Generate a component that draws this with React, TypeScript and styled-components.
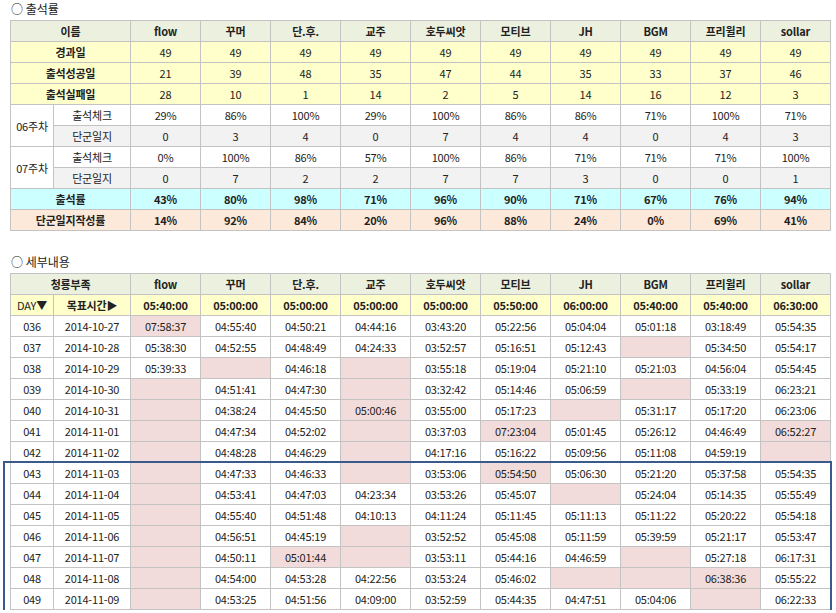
import { createGlobalStyle, styled } from "styled-components";

const GlobalStyle = createGlobalStyle`
  body {
    margin: 0;
    font-family: "Noto Sans CJK KR", "Noto Sans", sans-serif;
    font-size: 11px;
    color: #222;
    background: #fff;
  }
`;

const Page = styled.div`
  padding: 0 0 0 10px;
  width: 820px;
`;

const Title = styled.div<{ $top: number }>`
  margin-top: ${(p) => p.$top}px;
  height: 20px;
  line-height: 18px;
  font-size: 12px;
  margin-left: 1px;
`;

const Table = styled.table`
  border-collapse: collapse;
  table-layout: fixed;
  width: 821px;
`;

const Cell = styled.td<{ $bg?: string; $bold?: boolean }>`
  border: 1px solid #c3c3c3;
  height: 20px;
  padding: 0;
  text-align: center;
  background: ${(p) => p.$bg || "#fff"};
  font-weight: ${(p) => (p.$bold ? 700 : 400)};
  white-space: nowrap;
  letter-spacing: -0.2px;
`;

const BoxWrap = styled.div`
  position: relative;
`;

const Highlight = styled.div`
  position: absolute;
  left: -7px;
  right: -2px;
  top: 188px;
  height: 150px;
  border: 2px solid #3a5a8c;
  pointer-events: none;
`;

const HEAD = "#ebf1de";
const YEL = "#ffffcc";
const CYAN = "#ccffff";
const PEACH = "#fde9d9";
const GREY = "#f2f2f2";
const PINK = "#f2dcdb";

const names = ["flow", "꾸머", "단.후.", "교주", "호두씨앗", "모티브", "JH", "BGM", "프리윌리", "sollar"];

const summary: [string, string, string[]][] = [
  ["경과일", YEL, Array(10).fill("49")],
  ["출석성공일", YEL, ["21", "39", "48", "35", "47", "44", "35", "33", "37", "46"]],
  ["출석실패일", YEL, ["28", "10", "1", "14", "2", "5", "14", "16", "12", "3"]],
];

const weeks: [string, string[], string[]][] = [
  ["06주차", ["29%", "86%", "100%", "29%", "100%", "86%", "86%", "71%", "100%", "71%"], ["0", "3", "4", "0", "7", "4", "4", "0", "4", "3"]],
  ["07주차", ["0%", "100%", "86%", "57%", "100%", "86%", "71%", "71%", "71%", "100%"], ["0", "7", "2", "2", "7", "7", "3", "0", "0", "1"]],
];

const totals: [string, string, string[]][] = [
  ["출석률", CYAN, ["43%", "80%", "98%", "71%", "96%", "90%", "71%", "67%", "76%", "94%"]],
  ["단군일지작성률", PEACH, ["14%", "92%", "84%", "20%", "96%", "88%", "24%", "0%", "69%", "41%"]],
];

const targets = ["05:40:00", "05:00:00", "05:00:00", "05:00:00", "05:00:00", "05:50:00", "06:00:00", "05:40:00", "05:40:00", "06:30:00"];

// "*" prefix marks a pink (over target) cell; empty cells are pink too
const days: [string, string, string[]][] = [
  ["036", "2014-10-27", ["*07:58:37", "04:55:40", "04:50:21", "04:44:16", "03:43:20", "05:22:56", "05:04:04", "05:01:18", "03:18:49", "05:54:35"]],
  ["037", "2014-10-28", ["05:38:30", "04:52:55", "04:48:49", "04:24:33", "03:52:57", "05:16:51", "05:12:43", "", "05:34:50", "05:54:17"]],
  ["038", "2014-10-29", ["05:39:33", "", "04:46:18", "", "03:55:18", "05:19:04", "05:21:10", "05:21:03", "04:56:04", "05:54:45"]],
  ["039", "2014-10-30", ["", "04:51:41", "04:47:30", "", "03:32:42", "05:14:46", "05:06:59", "", "05:33:19", "06:23:21"]],
  ["040", "2014-10-31", ["", "04:38:24", "04:45:50", "*05:00:46", "03:55:00", "05:17:23", "", "05:31:17", "05:17:20", "06:23:06"]],
  ["041", "2014-11-01", ["", "04:47:34", "04:52:02", "", "03:37:03", "*07:23:04", "05:01:45", "05:26:12", "04:46:49", "*06:52:27"]],
  ["042", "2014-11-02", ["", "04:48:28", "04:46:29", "", "04:17:16", "05:16:22", "05:09:56", "05:11:08", "04:59:19", ""]],
  ["043", "2014-11-03", ["", "04:47:33", "04:46:33", "", "03:53:06", "*05:54:50", "05:06:30", "05:21:20", "05:37:58", "05:54:35"]],
  ["044", "2014-11-04", ["", "04:53:41", "04:47:03", "04:23:34", "03:53:26", "05:45:07", "", "05:24:04", "05:14:35", "05:55:49"]],
  ["045", "2014-11-05", ["", "04:55:40", "04:51:48", "04:10:13", "04:11:24", "05:11:45", "05:11:13", "05:11:22", "05:20:22", "05:54:18"]],
  ["046", "2014-11-06", ["", "04:56:51", "04:45:19", "", "03:52:52", "05:45:08", "05:11:59", "05:39:59", "05:21:17", "05:53:47"]],
  ["047", "2014-11-07", ["", "04:50:11", "*05:01:44", "", "03:53:11", "05:44:16", "04:46:59", "", "05:27:18", "06:17:31"]],
  ["048", "2014-11-08", ["", "04:54:00", "04:53:28", "04:22:56", "03:53:24", "05:46:02", "", "", "*06:38:36", "05:55:22"]],
  ["049", "2014-11-09", ["", "04:53:25", "04:51:56", "04:09:00", "03:52:59", "05:44:35", "04:47:51", "05:04:06", "", "06:22:33"]],
];

const Cols = () => (
  <colgroup>
    <col style={{ width: 43 }} />
    <col style={{ width: 77 }} />
    {names.map((n) => (
      <col key={n} style={{ width: 70 }} />
    ))}
  </colgroup>
);

export default function App() {
  return (
    <Page>
      <GlobalStyle />
      <Title $top={0}>○ 출석률</Title>
      <Table>
        <Cols />
        <tbody>
          <tr>
            <Cell colSpan={2} $bg={HEAD} $bold>이름</Cell>
            {names.map((n) => (
              <Cell key={n} $bg={HEAD} $bold>{n}</Cell>
            ))}
          </tr>
          {summary.map(([label, bg, vals]) => (
            <tr key={label}>
              <Cell colSpan={2} $bg={bg} $bold>{label}</Cell>
              {vals.map((v, i) => (
                <Cell key={i} $bg={bg}>{v}</Cell>
              ))}
            </tr>
          ))}
          {weeks.map(([wk, check, diary]) => [
            <tr key={wk + "a"}>
              <Cell rowSpan={2}>{wk}</Cell>
              <Cell>출석체크</Cell>
              {check.map((v, i) => (
                <Cell key={i}>{v}</Cell>
              ))}
            </tr>,
            <tr key={wk + "b"}>
              <Cell $bg={GREY}>단군일지</Cell>
              {diary.map((v, i) => (
                <Cell key={i} $bg={GREY}>{v}</Cell>
              ))}
            </tr>,
          ])}
          {totals.map(([label, bg, vals]) => (
            <tr key={label}>
              <Cell colSpan={2} $bg={bg} $bold>{label}</Cell>
              {vals.map((v, i) => (
                <Cell key={i} $bg={bg} $bold>{v}</Cell>
              ))}
            </tr>
          ))}
        </tbody>
      </Table>
      <Title $top={22}>○ 세부내용</Title>
      <BoxWrap>
        <Table>
          <Cols />
          <tbody>
            <tr>
              <Cell colSpan={2} $bg={HEAD} $bold>청룡부족</Cell>
              {names.map((n) => (
                <Cell key={n} $bg={HEAD} $bold>{n}</Cell>
              ))}
            </tr>
            <tr>
              <Cell $bg={YEL}>DAY▼</Cell>
              <Cell $bg={YEL} $bold>목표시간▶</Cell>
              {targets.map((t, i) => (
                <Cell key={i} $bg={YEL} $bold>{t}</Cell>
              ))}
            </tr>
            {days.map(([d, date, vals]) => (
              <tr key={d}>
                <Cell>{d}</Cell>
                <Cell>{date}</Cell>
                {vals.map((v, i) => {
                  const pink = v === "" || v.startsWith("*");
                  return (
                    <Cell key={i} $bg={pink ? PINK : undefined}>
                      {v.replace("*", "")}
                    </Cell>
                  );
                })}
              </tr>
            ))}
          </tbody>
        </Table>
        <Highlight />
      </BoxWrap>
    </Page>
  );
}
